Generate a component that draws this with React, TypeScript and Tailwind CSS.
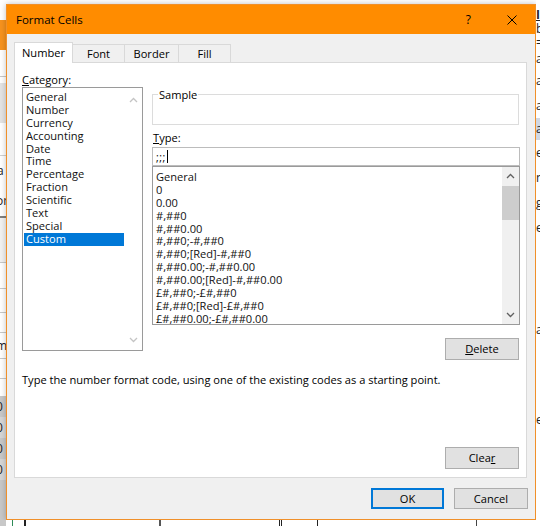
import React from "react";

const ChevronUp = ({ color }: { color: string }) => (
  <svg width="9" height="6" viewBox="0 0 9 6" className="block">
    <path d="M1 5 L4.5 1.5 L8 5" fill="none" stroke={color} strokeWidth="1.3" />
  </svg>
);
const ChevronDown = ({ color }: { color: string }) => (
  <svg width="9" height="6" viewBox="0 0 9 6" className="block">
    <path d="M1 1 L4.5 4.5 L8 1" fill="none" stroke={color} strokeWidth="1.3" />
  </svg>
);

const categories = [
  "General",
  "Number",
  "Currency",
  "Accounting",
  "Date",
  "Time",
  "Percentage",
  "Fraction",
  "Scientific",
  "Text",
  "Special",
  "Custom",
];

const formats = [
  "General",
  "0",
  "0.00",
  "#,##0",
  "#,##0.00",
  "#,##0;-#,##0",
  "#,##0;[Red]-#,##0",
  "#,##0.00;-#,##0.00",
  "#,##0.00;[Red]-#,##0.00",
  "£#,##0;-£#,##0",
  "£#,##0;[Red]-£#,##0",
  "£#,##0.00;-£#,##0.00",
];

function LeftStrip() {
  return (
    <div className="w-[6px] h-[520px] flex flex-col bg-white overflow-hidden">
      <div className="h-[20px]" />
      <div className="h-[30px] bg-[#f7931e]" />
      <div className="h-[27px] border-b border-[#c8c8c8]" />
      <div className="h-[6px]" />
      <div className="h-[40px] bg-[#e4e4e4]" />
      <div className="h-[33px] border-b border-[#d0d0d0]" />
      <div className="h-[30px] text-[12px] leading-[30px] -ml-[3px] text-[#222]">a</div>
      <div className="h-[30px] text-[12px] leading-[30px] -ml-[4px] text-[#222]">or</div>
      <div className="h-[2px] bg-[#808080]" />
      <div className="h-[45px] bg-[#f2f2f2] border-b border-[#c8c8c8]" />
      <div className="h-[26px] border-b border-[#c8c8c8]" />
      <div className="h-[24px] border-b border-[#c8c8c8]" />
      <div className="h-[20px] border-b border-[#c8c8c8]" />
      <div className="h-[26px] border-b border-[#c8c8c8] text-[12px] leading-[26px] -ml-[4px] text-[#222]">m</div>
      <div className="h-[20px] border-b border-[#c8c8c8]" />
      <div className="h-[17px]" />
      <div className="h-[21px] bg-[#c8c8c8] text-[12px] leading-[21px] -ml-[4px] text-[#222]">0</div>
      <div className="h-[21px] bg-[#d6d6d6] text-[12px] leading-[21px] -ml-[4px] text-[#222]">0</div>
      <div className="h-[21px] bg-[#c8c8c8] text-[12px] leading-[21px] -ml-[4px] text-[#222]">0</div>
      <div className="h-[21px] bg-[#d6d6d6] text-[12px] leading-[21px] -ml-[4px] text-[#222]">0</div>
      <div className="flex-1 bg-[#c8c8c8]" />
    </div>
  );
}

function RightStrip() {
  const rows: [number, string][] = [
    [8, ""],
    [14, "I"],
    [14, "b"],
    [14, "="],
    [18, "a"],
    [25, "a"],
    [25, "a"],
    [22, "a"],
    [25, "e"],
    [25, "n"],
    [25, "g"],
    [25, "e"],
  ];
  return (
    <div className="w-[4px] h-[520px] flex flex-col bg-white overflow-hidden text-[12px] text-[#222]">
      {rows.map(([h, t], i) => (
        <div
          key={i}
          style={{ height: h, lineHeight: `${h}px` }}
          className={i === 1 ? "font-bold underline" : i === 7 ? "bg-[#d0d8e4]" : ""}
        >
          {t}
        </div>
      ))}
      <div className="h-[80px]" />
      <div className="h-[20px] leading-[20px]">a</div>
      <div className="h-[70px]" />
      <div className="h-[20px] leading-[20px]">e</div>
    </div>
  );
}

function BottomStrip() {
  return (
    <div className="h-[6px] flex bg-white">
      <div className="w-[6px] bg-[#c8c8c8]" />
      <div className="w-[6px]" />
      <div className="w-[1px] bg-[#2e8b57]" />
      <div className="w-[11px]" />
      <div className="w-[2px] bg-[#222]" />
      <div className="w-[133px]" />
      <div className="w-[2px] bg-[#555]" />
      <div className="w-[118px]" />
      <div className="w-[1px] bg-[#222]" />
      <div className="w-[1px]" />
      <div className="w-[1px] bg-[#222]" />
      <div className="w-[35px]" />
      <div className="w-[1px] bg-[#222]" />
      <div className="w-[158px]" />
      <div className="w-[1px] bg-[#444]" />
    </div>
  );
}

function Btn({
  children,
  primary,
  className = "",
}: {
  children: React.ReactNode;
  primary?: boolean;
  className?: string;
}) {
  return (
    <div
      className={
        "flex items-center justify-center bg-[#e1e1e1] " +
        (primary ? "border-2 border-[#0078d7] " : "border border-[#adadad] ") +
        className
      }
    >
      {children}
    </div>
  );
}

function Dialog() {
  return (
    <div className="w-[530px] h-[516px] mt-[4px] border border-[#f0902a] bg-[#f0f0f0] flex flex-col shadow-[0_0_6px_rgba(0,0,0,0.25)]">
      {/* Title bar */}
      <div className="h-[29px] bg-[#ff8c00] flex items-center pl-[9px] shrink-0 pt-[1px]">
        <span className="text-[11.5px] leading-[14px]">Format Cells</span>
        <span className="ml-auto text-[12px] leading-[14px] mr-[36px]">?</span>
        <svg width="10" height="10" viewBox="0 0 10 10" className="mr-[18px]">
          <path d="M0.5 0.5 L9.5 9.5 M9.5 0.5 L0.5 9.5" stroke="#000" strokeWidth="1" />
        </svg>
      </div>

      <div className="px-[7px] pt-[9px] flex flex-col">
        {/* Tabs */}
        <div className="flex items-end h-[20px] relative z-10 -mb-px">
          <div className="w-[59px] h-[21px] bg-white border border-b-0 border-[#d9d9d9] flex items-center justify-center pb-[1px] leading-[14px]">
            Number
          </div>
          <div className="w-[52px] h-[19px] border-t border-r border-b border-[#d9d9d9] flex items-center justify-center leading-[14px]">
            Font
          </div>
          <div className="w-[54px] h-[19px] border-t border-r border-b border-[#d9d9d9] flex items-center justify-center leading-[14px]">
            Border
          </div>
          <div className="w-[52px] h-[19px] border-t border-r border-b border-[#d9d9d9] flex items-center justify-center leading-[14px]">
            Fill
          </div>
        </div>

        {/* Panel */}
        <div className="w-[513px] h-[416px] bg-white border border-[#d9d9d9] flex flex-col pl-[7px]">
          <div className="flex gap-[9px]">
            {/* Category column */}
            <div className="w-[121px] flex flex-col pt-[10px]">
              <div className="leading-[14px]">
                <span className="underline">C</span>ategory:
              </div>
              <div className="mt-[0px] h-[264px] border border-[#9a9a9a] flex">
                <div className="flex-1 pl-[1px] pt-[3px] flex flex-col">
                  {categories.map((c) => (
                    <div
                      key={c}
                      className={
                        "h-[12.9px] leading-[12.9px] pl-[2px] " +
                        (c === "Custom" ? "bg-[#0078d7] text-white" : "text-[#111]")
                      }
                    >
                      {c}
                    </div>
                  ))}
                </div>
                <div className="w-[18px] flex flex-col items-center justify-between pt-[9px] pb-[7px]">
                  <ChevronUp color="#c4c4c4" />
                  <ChevronDown color="#c4c4c4" />
                </div>
              </div>
            </div>

            {/* Right column */}
            <div className="w-[368px] flex flex-col">
              <div className="mt-[31px] w-[367px] h-[31px] border border-[#dcdcdc] relative">
                <span className="absolute left-[5px] -top-[7px] bg-white px-[1px] leading-[14px]">
                  Sample
                </span>
              </div>
              <div className="mt-[6px] pl-[1px] leading-[14px]">
                <span className="underline">T</span>ype:
              </div>
              <div className="mt-[2px] h-[19px] border border-[#bcbcbc] flex items-center pl-[3px]">
                <span className="leading-[14px] text-[10.5px] tracking-[0.5px]">;;;</span>
                <span className="inline-block w-px h-[13px] bg-black ml-[1px]" />
              </div>
              <div className="h-[159px] border border-[#9a9a9a] flex overflow-hidden">
                <div className="flex-1 pl-[3px] pt-[4px] flex flex-col text-[#111]">
                  {formats.map((f) => (
                    <div key={f} className="h-[12.9px] leading-[12.9px] whitespace-nowrap">
                      {f}
                    </div>
                  ))}
                </div>
                <div className="w-[17px] bg-[#f0f0f0] flex flex-col items-center">
                  <div className="h-[18px] flex items-center justify-center">
                    <ChevronUp color="#606060" />
                  </div>
                  <div className="w-[17px] h-[34px] bg-[#cdcdcd] mt-[1px]" />
                  <div className="flex-1" />
                  <div className="h-[18px] flex items-center justify-center">
                    <ChevronDown color="#606060" />
                  </div>
                </div>
              </div>
              <Btn className="mt-[13px] ml-auto mr-[1px] w-[74px] h-[22px]">
                <span className="leading-[14px]">
                  <span className="underline">D</span>elete
                </span>
              </Btn>
            </div>
          </div>

          <div className="mt-[13px] leading-[14px]">
            Type the number format code, using one of the existing codes as a starting point.
          </div>

          <Btn className="mt-[60px] self-end mr-[7px] w-[74px] h-[22px]">
            <span className="leading-[14px]">
              Clea<span className="underline">r</span>
            </span>
          </Btn>
        </div>

        {/* Bottom buttons */}
        <div className="mt-[10px] flex justify-end gap-[10px]">
          <Btn primary className="w-[73px] h-[21px]">
            <span className="leading-[14px]">OK</span>
          </Btn>
          <Btn className="w-[74px] h-[21px]">
            <span className="leading-[14px]">Cancel</span>
          </Btn>
        </div>
      </div>
    </div>
  );
}

export default function App() {
  return (
    <div className="w-[540px] h-[526px] bg-white overflow-hidden flex flex-col font-['Open_Sans',sans-serif] text-[11.1px] text-black">
      <div className="flex h-[520px]">
        <LeftStrip />
        <Dialog />
        <RightStrip />
      </div>
      <BottomStrip />
    </div>
  );
}
